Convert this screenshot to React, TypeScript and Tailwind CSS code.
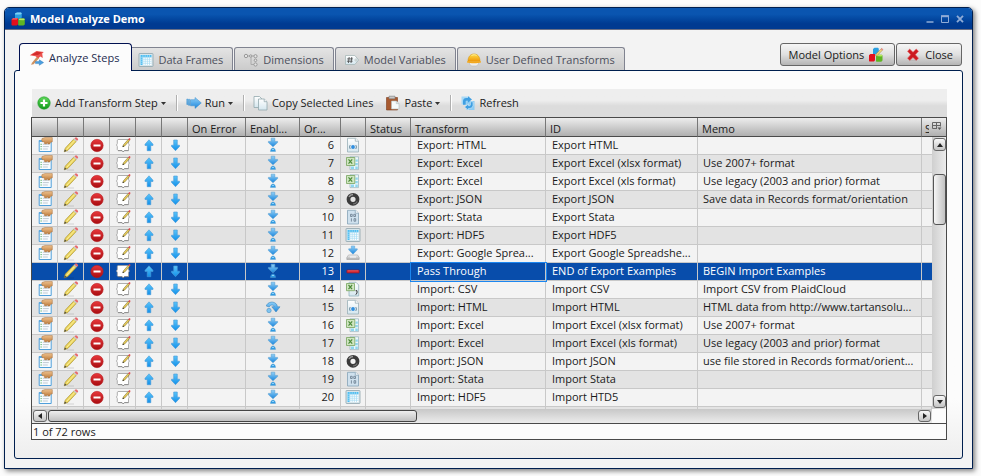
import React from "react";

type IconProps = { className?: string };

function Svg({ children, className = "" }: { children: React.ReactNode; className?: string }) {
  return (
    <svg viewBox="0 0 16 16" className={`block h-4 w-4 shrink-0 ${className}`} aria-hidden="true">
      {children}
    </svg>
  );
}

/* Gradients shared by all of the icons */
function Gradients() {
  const list: [string, string, string][] = [
    ["gBlue", "#8fd0f8", "#1c86dc"],
    ["gSky", "#5cc4f8", "#1290ea"],
    ["gRed", "#e8383c", "#a80c10"],
    ["gGreen", "#5fd75a", "#129a1c"],
    ["gPaper", "#ffffff", "#d4e6ee"],
    ["gHat", "#ffe04a", "#f0960a"],
    ["gGrey", "#f6f6f6", "#a8a8a8"],
    ["gHand", "#eec08c", "#bb7a3a"],
  ];
  return (
    <svg className="absolute h-0 w-0" aria-hidden="true">
      <defs>
        {list.map(([id, a, b]) => (
          <linearGradient key={id} id={id} x1="0" y1="0" x2="0" y2="1">
            <stop offset="0" stopColor={a} />
            <stop offset="1" stopColor={b} />
          </linearGradient>
        ))}
      </defs>
    </svg>
  );
}

function CubesIcon({ className }: IconProps) {
  return (
    <Svg className={className}>
      <path d="M5 2.5 7 1.500h4l.8 1v4l-1.600 1.300H5z" fill="#2b9fe0" />
      <path d="M5 2.500 7 1.500h4l.8 1-1.200.9H5z" fill="#7fd0f5" />
      <path d="M1.500 8.500 3 7.200h5v6L6.800 14.500H2.200L1.500 14z" fill="#e30f1c" />
      <path d="M1.500 8.500 3 7.200h5L6.800 8.600z" fill="#ff6a6a" />
      <path d="M8.200 9 9.600 7.600h4.600l.6.8v5l-1.300 1.100H8.700l-.5-.5z" fill="#5fb524" />
      <path d="M8.200 9 9.600 7.600h4.600l.6.8-1.200.9z" fill="#b7ea62" />
    </Svg>
  );
}

function CubesPencilIcon() {
  return (
    <Svg>
      <path d="M5 2 6.500.8H10l.8 1v4.400L9.500 7.500H5z" fill="#2b9fe0" />
      <path d="M1 8.200 2.400 7H7v6.300l-1 1.200H1.500L1 14z" fill="#e30f1c" />
      <path d="M8 9l1.300-1.300h4.500l.7.8v5l-1.200 1.200H8.400L8 14z" fill="#5fb524" />
      <path d="M8 9l1.300-1.300h4.500l.7.8-1.100.9z" fill="#b7ea62" />
      <path d="m7.500 9 .6-2 5.400-5.600 1.400 1.300L9.400 8.400z" fill="#f1d67a" stroke="#9a8648" strokeWidth=".5" />
      <path d="m12.700 2.200 1-1.100 1.500 1.300-1 1.100z" fill="#e88a8a" />
    </Svg>
  );
}

function StepsIcon() {
  return (
    <Svg>
      <path d="M8.500 6 10.300 8 4.600 14.300 2 14.800l1.200-2.400z" fill="#cf9260" />
      <path d="M.8 5.300 7.500 1l7.300.9-1.600 1.700.6 4.400-2.500-1.400-2 1.600-2.800-2z" fill="#ec524e" />
      <path d="m2.500 5 5.500-3.300 5 .7L9 5z" fill="#d22c2c" />
      <path d="M6.500 11.600h3.800V9.800l4.300 2.800-4.300 2.700v-1.700H6.500z" fill="#4a9fe0" stroke="#2372b4" strokeWidth=".4" />
    </Svg>
  );
}

function GridIcon() {
  return (
    <Svg>
      <rect x="1" y="1.500" width="14" height="13" rx=".6" fill="#d7e6ec" stroke="#8fa5ad" strokeWidth=".8" />
      <rect x="2.500" y="3" width="11" height="10" fill="#ffffff" />
      <path d="M2.500 3h11v2.200h-11zM2.500 3h2.200v10H2.500z" fill="#4cbdf2" />
      <path d="M4.900 3v10M7.200 3v10M9.400 3v10M11.500 3v10M2.500 5.300h11M2.500 7.300h11M2.500 9.300h11M2.500 11.300h11" stroke="#a9dcf4" strokeWidth=".7" />
    </Svg>
  );
}

function DimensionsIcon() {
  return (
    <Svg>
      <g fill="#e4e4e4" stroke="#999" strokeWidth="1">
        <path d="M4 4h8M8 4v8.500h4" fill="none" stroke="#aaa" />
        <circle cx="3" cy="4" r="1.700" />
        <circle cx="7.700" cy="4" r="1.200" />
        <circle cx="12.500" cy="4.200" r="1.600" />
        <circle cx="12.500" cy="8.300" r="1.300" />
        <circle cx="12.500" cy="12.500" r="1.600" />
      </g>
    </Svg>
  );
}

function TagIcon() {
  return (
    <Svg>
      <path d="M1.500 3.500h9.300L14.700 8l-3.900 4.500H1.500z" fill="url(#gPaper)" stroke="#a7b7b7" strokeWidth=".8" />
      <path d="M5.200 5 4.400 11M7.800 5 7 11M3.200 6.900h5.700M2.900 9.200h5.700" stroke="#444" strokeWidth=".8" />
      <circle cx="12" cy="8" r="1.100" fill="#fff" stroke="#9aa" strokeWidth=".6" />
    </Svg>
  );
}

function HatIcon() {
  return (
    <Svg>
      <path d="M3.500 10h9v2L10.500 14h-5L3.500 12z" fill="#eee" stroke="#b9b9b9" strokeWidth=".6" />
      <path d="M2 9.300C2 4.500 4.700 2 8 2s6 2.500 6 7.300z" fill="url(#gHat)" stroke="#d9970d" strokeWidth=".6" />
      <path d="M1 9.200h14v1.300c-3 .9-11 .9-14 0z" fill="#f4a81c" />
      <path d="M5.500 3.500c2-1 3.500-1 5 0" fill="none" stroke="#fff0a0" strokeWidth="1" />
    </Svg>
  );
}

function CloseIcon() {
  return (
    <Svg>
      <path
        d="m2.500 4.200 2.200-2.100L8 5.200l3.200-3.100 2.300 2.100L10.400 7.700l3.100 3.500-2.300 2.400L8 10.400l-3.300 3.200-2.200-2.400 3.100-3.500z"
        fill="#cc1a20"
        stroke="#ea6a6a"
        strokeWidth=".6"
      />
      <path d="M4 13.600h8" stroke="#999" strokeWidth=".6" opacity=".5" />
    </Svg>
  );
}

function AddIcon() {
  return (
    <Svg>
      <circle cx="8" cy="8" r="6.200" fill="url(#gGreen)" stroke="#189a22" strokeWidth=".6" />
      <path d="M8 4.500v7M4.500 8h7" stroke="#fff" strokeWidth="2.200" />
    </Svg>
  );
}

function RunIcon() {
  return (
    <Svg>
      <path d="M.8 4h1v5.500h-1zM2.500 4.300h1.300v6H2.500zM4.500 4.700H9V2.500l6.300 5.400L9 13.400v-2.600H4.500z" fill="url(#gBlue)" stroke="#3a8cca" strokeWidth=".5" />
    </Svg>
  );
}

function CopyIcon() {
  return (
    <Svg>
      <path d="M1 1.500h5.500L9 4v8.500H1z" fill="url(#gPaper)" stroke="#93a8ad" strokeWidth=".8" />
      <path d="M5.500 4h5.700L14 6.700V15H5.500z" fill="url(#gPaper)" stroke="#93a8ad" strokeWidth=".8" />
      <path d="M11.200 4v2.700H14" fill="#fff" stroke="#93a8ad" strokeWidth=".8" />
    </Svg>
  );
}

function PasteIcon() {
  return (
    <Svg>
      <path d="M1.500 2.500h11V15h-11z" fill="#a85a30" stroke="#7c3d1c" strokeWidth=".6" />
      <path d="M4 1.200h6v2.600H4z" fill="#c9c9c9" stroke="#777" strokeWidth=".6" />
      <path d="M6.500 6h5L14 8.500V14H6.500z" fill="#f6fbfb" stroke="#b3c0c0" strokeWidth=".6" />
      <path d="M11.300 6v2.600H14" fill="none" stroke="#a9b8b8" strokeWidth=".6" />
    </Svg>
  );
}

function RefreshIcon() {
  return (
    <Svg>
      <path d="M1.500 1.500h8v8h-8z" fill="#a8d9f6" />
      <path d="M6.500 6h8v9h-8z" fill="#8ccbf3" />
      <path d="M3 9.800V6A3.300 3.300 0 0 1 6.300 3H8V1.200l4 3.200-4 3.100V5.700H6.700c-.7 0-1 .4-1 1v3.100z" fill="#3f9fe2" />
      <path d="M13 6.800v3.700a3.300 3.300 0 0 1-3.300 3H8.500v1.700l-4-3.100 4-3.200v1.800h1c.6 0 .9-.4.9-1V6.800z" fill="#3f9fe2" stroke="#e9f6fd" strokeWidth=".5" />
    </Svg>
  );
}

function FormIcon() {
  return (
    <Svg>
      <path d="M2.500 4h12v10.500h-12z" fill="#f8fcff" />
      <path d="M2.200 3.500v11h12v-11" fill="none" stroke="#4f9fda" strokeWidth="1" />
      <path d="M2 3h4v2H2z" fill="#5da9e0" />
      <path d="M3.500 7.300h1.300M3.500 9.600h1.300M3.500 12h1.300" stroke="#4fae58" strokeWidth=".9" />
      <path d="M5.800 7.300h6M5.800 9.600h6M5.800 12h5" stroke="#b4bec8" strokeWidth=".8" />
      <path d="M5 1.500 8 .6h7.300v4.200L13.200 5.500l-.4 1.600-1.700-.2-.7-.9-1.300.9-1.800-.5.200-1.500-2.200-.2-.6-1.300z" fill="url(#gHand)" stroke="#a8703a" strokeWidth=".5" />
    </Svg>
  );
}

function PencilIcon() {
  return (
    <Svg>
      <path d="M4 15h7" stroke="#000" strokeWidth="1" opacity=".12" />
      <path d="m1.200 14.800 1.100-3.700L10.600 2.200l2.600 2.300L4.800 13.500z" fill="#ecd45a" stroke="#a08a2c" strokeWidth=".6" />
      <path d="m3.700 12.300 8.200-9" stroke="#fbf2a8" strokeWidth=".9" />
      <path d="m1.200 14.800.7-2.300 1.700 1.500z" fill="#444" />
      <path d="m10.600 2.200.9-.9 2.600 2.300-.9.900z" fill="#c9c9c9" />
      <path d="m11.500 1.300.8-.7h1.500l1.300 1.300-.1 1-.9.800z" fill="#e8696d" />
    </Svg>
  );
}

function StopIcon() {
  return (
    <Svg>
      <circle cx="8" cy="8.500" r="6.200" fill="url(#gRed)" stroke="#b5181c" strokeWidth=".5" />
      <path d="M4.500 7.500h7v2h-7z" fill="#fff" />
    </Svg>
  );
}

function NoteIcon() {
  return (
    <Svg>
      <path
        d="M3 2.500h10.500v4l.8 1.500-.8 1.500v4H9.500L8.200 14.800 7 13.500H3l-.7-.7V9.500L1.500 8l.8-1.500V3.200z"
        fill="#fff"
        stroke="#9a9a9a"
        strokeWidth=".8"
        strokeLinejoin="round"
      />
      <path d="M3 13.700h4l1.200 1.300 1.300-1.300h4" fill="none" stroke="#777" strokeWidth=".6" />
      <path d="m7.800 9.700.7-2 4.700-5.300 1.300 1.200-4.700 5.300z" fill="#e9cf58" stroke="#6c5b1c" strokeWidth=".5" />
      <path d="m13.200 2.300 1.100-1.300 1.400 1.100-1.200 1.400z" fill="#e3484d" />
      <path d="m7.500 10 .5-1.500 1.100 1z" fill="#222" />
    </Svg>
  );
}

function UpIcon() {
  return (
    <Svg>
      <path d="M8 2.800 12 7.200v1.300H9.800v5.200H6.200V8.500H4V7.200z" fill="url(#gSky)" stroke="#4a9ad6" strokeWidth=".6" />
    </Svg>
  );
}

function DownIcon() {
  return (
    <Svg>
      <path d="M6.700 3h3.600v5.200h2.200v1.200L8.500 13.700 4.500 9.400V8.200h2.200z" fill="url(#gSky)" stroke="#4a9ad6" strokeWidth=".6" />
    </Svg>
  );
}

function EnabledIcon() {
  return (
    <Svg>
      <path d="M6.200 1.200h3.600v3.200h2.800v1.200L8 9.800 3.400 5.600V4.400h2.800z" fill="url(#gBlue)" stroke="#5a9fd0" strokeWidth=".6" />
      <path d="M8 11c1.600 0 2.300 1.500 2.600 3.500H5.400C5.700 12.500 6.400 11 8 11z" fill="#2e9be4" stroke="#5a9fd0" strokeWidth=".4" />
      <path d="M7 12.500h2" stroke="#a6dcfa" strokeWidth=".8" />
    </Svg>
  );
}

function SkipIcon() {
  return (
    <Svg>
      <path d="M1.300 7C2.500 2.500 9.500 1.500 12 6l.3 1.800H15L11 13 6.800 7.800h2.400C8.500 5.500 5.300 5.500 4.300 8z" fill="url(#gBlue)" stroke="#3d87bd" strokeWidth=".6" />
      <circle cx="4" cy="11.500" r="2.200" fill="#7fc4f0" stroke="#3d87bd" strokeWidth=".5" />
    </Svg>
  );
}

function HtmlIcon() {
  return (
    <Svg>
      <path d="M2.500 1.300h8L13.500 4v11h-11z" fill="url(#gPaper)" stroke="#9bb0b8" strokeWidth=".8" />
      <path d="M10.300 1.300V4.200h3.200" fill="#fff" stroke="#9bb0b8" strokeWidth=".8" />
      <circle cx="8" cy="10" r="1.900" fill="#2f8fe0" />
      <path d="M5.400 8c-1 .8-1 3.200 0 4M10.600 8c1 .8 1 3.200 0 4" fill="none" stroke="#5d7e93" strokeWidth=".9" />
    </Svg>
  );
}

function ExcelIcon() {
  return (
    <Svg>
      <path d="M5 1.800h8.500v12.800H5z" fill="#eef7fa" stroke="#93b2bd" strokeWidth=".7" />
      <path d="M10.500 4.500h2.300v2.200h-2.300zM6 11.500h3V14H6zM10.300 8h2.500v2.200h-2.500zM10.300 11.500h2.500V14h-2.500z" fill="#8fd6ee" />
      <path d="M1.500 2.500h8.300v8H1.500z" fill="#d0e6c2" stroke="#76a35d" strokeWidth=".8" />
      <path d="m3.500 4.300 3.700 4.400M7.200 4.300 3.500 8.700" stroke="#4c8a3a" strokeWidth="1.200" />
    </Svg>
  );
}

function CsvIcon() {
  return (
    <Svg>
      <path d="M4 1.300h7L13.700 4v11H4z" fill="url(#gPaper)" stroke="#93b2bd" strokeWidth=".8" />
      <path d="M1.500 2.500h8v7.200h-8z" fill="#d0e6c2" stroke="#76a35d" strokeWidth=".8" />
      <path d="m3.500 4 3.600 4.200M7.100 4 3.500 8.200" stroke="#4c8a3a" strokeWidth="1.200" />
      <path d="M10.600 9.700h1.400v2.300l-1.200 1.700" fill="none" stroke="#333" strokeWidth="1" />
    </Svg>
  );
}

function JsonIcon() {
  return (
    <Svg>
      <circle cx="8" cy="8.300" r="4.500" fill="none" stroke="#3c3c3c" strokeWidth="3.800" />
      <path d="M4 6a4.800 4.800 0 0 1 4-2.500" fill="none" stroke="#9c9c9c" strokeWidth="1.500" />
      <path d="M12.200 10.500A4.800 4.800 0 0 1 8 13" fill="none" stroke="#777" strokeWidth="1.200" />
    </Svg>
  );
}

function StataIcon() {
  return (
    <Svg>
      <path d="M2.500 1.300h8L13.500 4v11h-11z" fill="#cfe1ee" stroke="#86a3b8" strokeWidth=".8" />
      <path d="M10.300 1.300V4.200h3.200" fill="#fff" stroke="#86a3b8" strokeWidth=".8" />
      <path d="M5.500 5.300h1.700v2.200H5.500zM8.800 5.300h1.700v2.200H8.800zM9 9.700h1.700v2.500H9zM6.400 9.300v3.300" fill="none" stroke="#66798a" strokeWidth=".8" />
    </Svg>
  );
}

function DriveIcon() {
  return (
    <Svg>
      <path d="M3.500 10h9l1.700 2.500v2H1.800v-2z" fill="url(#gGrey)" stroke="#a4a4a4" strokeWidth=".6" />
      <path d="M6.300 1h3.400v2.800h2.600v1L8 9.200 3.700 4.800v-1h2.600z" fill="url(#gBlue)" stroke="#5a9fd0" strokeWidth=".5" />
      <path d="M5 12h6" stroke="#fff" strokeWidth=".9" />
    </Svg>
  );
}

function PassIcon() {
  return (
    <Svg>
      <rect x="1.800" y="7" width="12.400" height="3" rx=".5" fill="#d8262e" stroke="#7d1a3a" strokeWidth=".7" />
      <path d="M2.500 7.800h11" stroke="#f08088" strokeWidth=".6" />
    </Svg>
  );
}

const kindIcons = {
  html: HtmlIcon,
  excel: ExcelIcon,
  csv: CsvIcon,
  json: JsonIcon,
  stata: StataIcon,
  grid: GridIcon,
  drive: DriveIcon,
  pass: PassIcon,
};

type Row = { order: number; kind: keyof typeof kindIcons; transform: string; id: string; memo?: string; skip?: boolean };

const rows: Row[] = [
  { order: 6, kind: "html", transform: "Export: HTML", id: "Export HTML" },
  { order: 7, kind: "excel", transform: "Export: Excel", id: "Export Excel (xlsx format)", memo: "Use 2007+ format" },
  { order: 8, kind: "excel", transform: "Export: Excel", id: "Export Excel (xls format)", memo: "Use legacy (2003 and prior) format" },
  { order: 9, kind: "json", transform: "Export: JSON", id: "Export JSON", memo: "Save data in Records format/orientation" },
  { order: 10, kind: "stata", transform: "Export: Stata", id: "Export Stata" },
  { order: 11, kind: "grid", transform: "Export: HDF5", id: "Export HDF5" },
  { order: 12, kind: "drive", transform: "Export: Google Sprea...", id: "Export Google Spreadshe..." },
  { order: 13, kind: "pass", transform: "Pass Through", id: "END of Export Examples", memo: "BEGIN Import Examples" },
  { order: 14, kind: "csv", transform: "Import: CSV", id: "Import CSV", memo: "Import CSV from PlaidCloud" },
  { order: 15, kind: "html", transform: "Import: HTML", id: "Import HTML", memo: "HTML data from http://www.tartansolu...", skip: true },
  { order: 16, kind: "excel", transform: "Import: Excel", id: "Import Excel (xlsx format)", memo: "Use 2007+ format" },
  { order: 17, kind: "excel", transform: "Import: Excel", id: "Import Excel (xls format)", memo: "Use legacy (2003 and prior) format" },
  { order: 18, kind: "json", transform: "Import: JSON", id: "Import JSON", memo: "use file stored in Records format/orient..." },
  { order: 19, kind: "stata", transform: "Import: Stata", id: "Import Stata" },
  { order: 20, kind: "grid", transform: "Import: HDF5", id: "Import HTD5" },
];

const actions = [
  { label: "Properties", Icon: FormIcon },
  { label: "Edit", Icon: PencilIcon },
  { label: "Delete", Icon: StopIcon },
  { label: "Notes", Icon: NoteIcon },
  { label: "Move up", Icon: UpIcon },
  { label: "Move down", Icon: DownIcon },
];

const headers = ["", "", "", "", "", "", "On Error", "Enabl...", "Or...", "", "Status", "Transform", "ID", "Memo"];

function Columns({ last }: { last: string }) {
  return (
    <colgroup>
      {actions.map((a) => (
        <col key={a.label} className="w-[26px]" />
      ))}
      <col className="w-[58px]" />
      <col className="w-[54px]" />
      <col className="w-[41px]" />
      <col className="w-[25px]" />
      <col className="w-[45px]" />
      <col className="w-[135px]" />
      <col className="w-[152px]" />
      <col />
      <col className={last} />
    </colgroup>
  );
}

function StepRow({ row, index }: { row: Row; index: number }) {
  const selected = row.order === 13;
  const Kind = kindIcons[row.kind];
  const tone = selected ? "bg-[#084dab] text-white" : index % 2 ? "bg-[#e3e3e3]" : "bg-[#f3f3f3]";
  const cell = "h-[18px] border-r border-b border-[#c8c8c8] p-0 align-top whitespace-nowrap";
  return (
    <tr className={tone} aria-selected={selected}>
      {actions.map(({ label, Icon }, i) => (
        <td key={label} className={cell}>
          {!(selected && i === 0) && (
            <button type="button" aria-label={`${label} step ${row.order}`} className="mx-auto block h-4 w-4">
              <Icon />
            </button>
          )}
        </td>
      ))}
      <td className={cell} />
      <td className={cell}>
        <div className="flex justify-center">{row.skip ? <SkipIcon /> : <EnabledIcon />}</div>
      </td>
      <td className={`${cell} pr-1.5 text-right`}>{row.order}</td>
      <td className={cell}>
        <div className="flex justify-center">
          <Kind />
        </div>
      </td>
      <td className={cell} />
      <td className={`${cell} pl-1.5 ${selected ? "relative z-10 outline-1 outline-[#1b86f0]" : ""}`}>{row.transform}</td>
      <td className={`${cell} overflow-hidden pl-1.5`}>{row.id}</td>
      <td className={`${cell} overflow-hidden pl-[5px]`}>{row.memo}</td>
      <td className="border-b border-[#c8c8c8] p-0" />
    </tr>
  );
}

function ScrollButton({ label, d, className }: { label: string; d: string; className: string }) {
  return (
    <button
      type="button"
      aria-label={label}
      className={`flex shrink-0 items-center justify-center rounded-[3px] border border-[#666] bg-linear-to-b from-[#f8f8f8] to-[#c4c4c4] ${className}`}
    >
      <svg viewBox="0 0 6 6" className="h-1.5 w-1.5" aria-hidden="true">
        <path d={d} fill="#222" />
      </svg>
    </button>
  );
}

function Caret() {
  return (
    <svg viewBox="0 0 5 3" className="h-[3px] w-[5px]" aria-hidden="true">
      <path d="M0 0h5L2.500 3z" fill="#333" />
    </svg>
  );
}

function ToolButton({ icon, children, menu }: { icon: React.ReactNode; children: React.ReactNode; menu?: boolean }) {
  return (
    <button type="button" aria-haspopup={menu ? "menu" : undefined} className="flex items-center gap-[3px] whitespace-nowrap">
      {icon}
      <span>{children}</span>
      {menu && <Caret />}
    </button>
  );
}

function Separator() {
  return <span className="mr-2 ml-2.5 h-4 w-0.5 border-r border-l border-r-white border-l-[#b0b0b0]" />;
}

const tabs = [
  { label: "Data Frames", icon: <GridIcon /> },
  { label: "Dimensions", icon: <DimensionsIcon /> },
  { label: "Model Variables", icon: <TagIcon /> },
  { label: "User Defined Transforms", icon: <HatIcon /> },
];

const actionButton =
  "flex h-[23px] items-center gap-1 rounded-[3px] border border-[#666] bg-linear-to-b from-[#f6f6f6] via-[#e0e0e0] to-[#b4b4b4] pl-2 whitespace-nowrap";

export default function App() {
  return (
    <div className="bg-[#fcfcfc] pt-[7px] pr-2 pb-[7px] pl-1 font-['Open_Sans','Noto_Sans',sans-serif] text-[11px] leading-4 text-[#1a1a1a]">
      <Gradients />
      <section className="rounded-t-[5px] border border-[#001f4f] bg-[#f3f3f3] shadow-[2px_2px_5px_rgba(0,0,0,0.5)]">
        <header className="flex h-[22px] items-center rounded-t-[4px] border-b border-[#6a6f85] bg-linear-to-b from-[#0a55b0] from-30% to-[#003a91] to-75% pr-2 pl-[5px] text-white">
          <CubesIcon />
          <h1 className="ml-1 flex-1 text-[11px] font-bold">Model Analyze Demo</h1>
          <div className="flex items-center gap-[7px] text-[#8fabd6]">
            <button type="button" aria-label="Minimize">
              <svg viewBox="0 0 8 8" className="h-2 w-2"><path d="M.5 7h7" stroke="currentColor" strokeWidth="1.500" /></svg>
            </button>
            <button type="button" aria-label="Maximize">
              <svg viewBox="0 0 8 8" className="h-2 w-2">
                <path d="M.5 1h7v6.500h-7z" fill="none" stroke="currentColor" />
                <path d="M0 1.200h8" stroke="currentColor" strokeWidth="2" />
              </svg>
            </button>
            <button type="button" aria-label="Close window">
              <svg viewBox="0 0 8 8" className="h-2 w-2"><path d="m1 .8 6 6.400M7 .8 1 7.200" stroke="currentColor" strokeWidth="1.800" /></svg>
            </button>
          </div>
        </header>

        <div className="px-[9px] pt-[13px] pb-[9px]">
          <div className="flex items-start justify-between">
            <div role="tablist" className="z-10 -mb-px ml-[5px] flex items-end">
              <button
                type="button"
                role="tab"
                aria-selected="true"
                className="z-10 -mr-[3px] flex h-7 items-center gap-1 rounded-t-[4px] border border-b-0 border-[#001050] bg-[#fcfcfc] pr-3 pl-[9px] whitespace-nowrap text-[#1c2c50]"
              >
                <StepsIcon />
                Analyze Steps
              </button>
              {tabs.map((t) => (
                <button
                  key={t.label}
                  type="button"
                  role="tab"
                  aria-selected="false"
                  className="mr-px mb-px flex h-[23px] items-center gap-1 rounded-t-[3px] border border-b-0 border-[#808390] bg-linear-to-b from-[#e4e4e4] to-[#cbcbcb] pt-0.5 pr-[9px] pl-2 whitespace-nowrap text-[#4c4f5c]"
                >
                  {t.icon}
                  {t.label}
                </button>
              ))}
            </div>
            <div className="flex gap-px pr-px">
              <button type="button" className={`${actionButton} pr-2.5`}>
                Model Options
                <CubesPencilIcon />
              </button>
              <button type="button" className={`${actionButton} pr-2`}>
                <CloseIcon />
                Close
              </button>
            </div>
          </div>

          <main className="rounded-[3px] border border-[#001f4f] bg-linear-to-b from-[#fcfcfc] from-85% to-[#eeeeee] pt-[18px] pr-[15px] pb-[18px] pl-4">
            <div role="toolbar" className="ml-px flex h-7 items-center bg-linear-to-b from-[#eeeeee] from-40% to-[#dcdcdc] to-60% pl-1">
              <ToolButton icon={<AddIcon />} menu>Add Transform Step</ToolButton>
              <Separator />
              <ToolButton icon={<RunIcon />} menu>Run</ToolButton>
              <Separator />
              <ToolButton icon={<CopyIcon />}>Copy Selected Lines</ToolButton>
              <span className="w-3" />
              <ToolButton icon={<PasteIcon />} menu>Paste</ToolButton>
              <Separator />
              <ToolButton icon={<RefreshIcon />}>Refresh</ToolButton>
            </div>

            <div className="border border-[#4a4a4a] bg-[#fcfcfc]">
              <table className="w-full table-fixed border-separate border-spacing-0" aria-label="Step columns">
                <Columns last="w-[24px]" />
                <thead>
                  <tr className="bg-linear-to-b from-[#ededed] to-[#acacac]">
                    {headers.map((h, i) => (
                      <th key={i} className="h-[19px] overflow-hidden border-r border-b border-[#4a4a4a] border-r-[#777] p-0 pt-[3px] pl-1 text-left leading-[15px] font-normal whitespace-nowrap">
                        {h}
                      </th>
                    ))}
                    <th className="border-b border-[#4a4a4a] p-0 pl-[3px] text-left align-top leading-[15px] font-normal">
                      <div className="flex items-start gap-0.5 pt-[3px]">
                        <span className="h-[15px] w-1 overflow-hidden">S</span>
                        <button type="button" aria-label="Choose columns">
                          <svg viewBox="0 0 11 10" className="block h-2.5 w-[11px]" fill="none" stroke="#666" aria-hidden="true">
                            <path d="M1.500 1.500h8v4M1.500 1.500v6h4.500M1.500 4.500h8M5.500 1.500v6" />
                            <path d="M6.500 6.500h4l-2 2.500z" fill="#555" stroke="none" />
                          </svg>
                        </button>
                      </div>
                    </th>
                  </tr>
                </thead>
              </table>

              <div className="flex">
                <div className="h-[272px] min-w-0 flex-1 overflow-hidden">
                  <table className="w-full table-fixed border-separate border-spacing-0" aria-label="Transform steps">
                    <Columns last="w-[10px]" />
                    <tbody>
                      {rows.map((r, i) => (
                        <StepRow key={r.order} row={r} index={i} />
                      ))}
                      <tr className="bg-[#e3e3e3]">
                        {[...headers, ""].map((_, i) => (
                          <td key={i} className="h-[18px] border-r border-[#c8c8c8] p-0" />
                        ))}
                      </tr>
                    </tbody>
                  </table>
                </div>
                <div className="flex w-3.5 flex-col bg-linear-to-r from-[#cfcfcf] to-[#ececec] pt-px pl-px">
                  <ScrollButton label="Scroll up" d="M0 5h6L3 1z" className="h-[13px] w-[13px]" />
                  <div className="mt-[23px] h-[51px] w-[13px] rounded-[3px] border border-[#555] bg-linear-to-r from-[#f6f6f6] to-[#c2c2c2]" />
                  <ScrollButton label="Scroll down" d="M0 1h6L3 5z" className="mt-auto mb-px h-[13px] w-[13px]" />
                </div>
              </div>

              <div className="mr-3.5 flex h-3.5 items-center bg-linear-to-b from-[#c8c8c8] to-[#ececec] px-px">
                <ScrollButton label="Scroll left" d="M5 0v6L1 3z" className="h-3 w-3.5" />
                <div className="ml-px h-3 w-[369px] rounded-[3px] border border-[#444] bg-linear-to-b from-[#eeeeee] to-[#c0c0c0]" />
                <ScrollButton label="Scroll right" d="M1 0v6l4-3z" className="ml-auto h-3 w-[13px]" />
              </div>
              <div className="h-4 border-t border-[#4a4a4a] pl-px leading-4">1 of 72 rows</div>
            </div>
          </main>
        </div>
      </section>
    </div>
  );
}
